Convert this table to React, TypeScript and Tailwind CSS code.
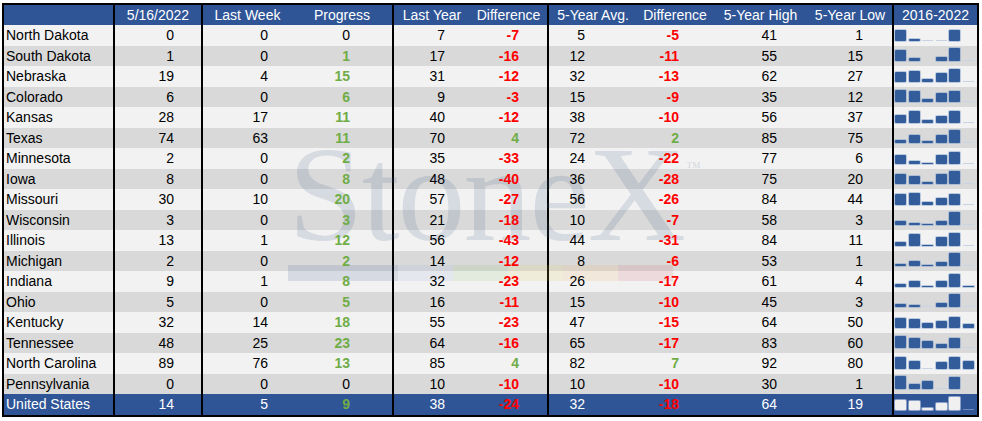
import React from "react";

type Row = [string, number, number, number, number, number, number, number, number, number];

const rows: Row[] = [
  ["North Dakota", 0, 0, 0, 7, -7, 5, -5, 41, 1],
  ["South Dakota", 1, 0, 1, 17, -16, 12, -11, 55, 15],
  ["Nebraska", 19, 4, 15, 31, -12, 32, -13, 62, 27],
  ["Colorado", 6, 0, 6, 9, -3, 15, -9, 35, 12],
  ["Kansas", 28, 17, 11, 40, -12, 38, -10, 56, 37],
  ["Texas", 74, 63, 11, 70, 4, 72, 2, 85, 75],
  ["Minnesota", 2, 0, 2, 35, -33, 24, -22, 77, 6],
  ["Iowa", 8, 0, 8, 48, -40, 36, -28, 75, 20],
  ["Missouri", 30, 10, 20, 57, -27, 56, -26, 84, 44],
  ["Wisconsin", 3, 0, 3, 21, -18, 10, -7, 58, 3],
  ["Illinois", 13, 1, 12, 56, -43, 44, -31, 84, 11],
  ["Michigan", 2, 0, 2, 14, -12, 8, -6, 53, 1],
  ["Indiana", 9, 1, 8, 32, -23, 26, -17, 61, 4],
  ["Ohio", 5, 0, 5, 16, -11, 15, -10, 45, 3],
  ["Kentucky", 32, 14, 18, 55, -23, 47, -15, 64, 50],
  ["Tennessee", 48, 25, 23, 64, -16, 65, -17, 83, 60],
  ["North Carolina", 89, 76, 13, 85, 4, 82, 7, 92, 80],
  ["Pennsylvania", 0, 0, 0, 10, -10, 10, -10, 30, 1],
  ["United States", 14, 5, 9, 38, -24, 32, -18, 64, 19],
];

const sparks: number[][] = [
  [11, 2, 0, 0, 11, -1],
  [11, 3, -1, 4, 13, 0],
  [10, 11, 3, 9, 13, 0],
  [12, 11, 3, 9, 11, 0],
  [8, 12, 3, 7, 12, 0],
  [3, 8, 2, 8, 13, 0],
  [9, 3, 1, 9, 12, 0],
  [10, 8, 2, 10, 13, 0],
  [11, 12, 3, 7, 11, 0],
  [4, 2, 1, 4, 13, 0],
  [4, 12, 1, 9, 13, 0],
  [2, 5, 1, 4, 13, 0],
  [3, 6, 1, 6, 13, 1],
  [3, 2, 0, 4, 13, 0],
  [10, 9, 5, 7, 11, 4],
  [12, 10, 7, 4, 10, 0],
  [12, 8, 0, 7, 12, 8],
  [13, 5, 8, 0, 12, -1],
  [10, 9, 2, 7, 13, 0],
];

const cols = [
  { w: "w-[111px]", pr: "", b: true },
  { w: "w-[88px]", pr: "pr-[27px]", b: true },
  { w: "w-[89px]", pr: "pr-[24px]", b: false },
  { w: "w-[102px]", pr: "pr-[42px]", b: true },
  { w: "w-[76px]", pr: "pr-[25px]", b: false },
  { w: "w-[79px]", pr: "pr-[28px]", b: true },
  { w: "w-[88px]", pr: "pr-[52px]", b: false },
  { w: "w-[76px]", pr: "pr-[34px]", b: false },
  { w: "w-[95px]", pr: "pr-[31px]", b: false },
  { w: "w-[86px]", pr: "pr-[29px]", b: true },
];

const headers = ["", "5/16/2022", "Last Week", "Progress", "Last Year", "Difference", "5-Year Avg.", "Difference", "5-Year High", "5-Year Low"];

function valueClass(ci: number, v: number, total: boolean) {
  if (ci === 3) {
    if (v > 0) return "text-[#70ad47] font-bold";
  }
  if (ci === 5 || ci === 7) {
    if (v < 0) return "text-[#ff0000] font-bold";
    if (v > 0) return "text-[#70ad47] font-bold";
  }
  return total ? "text-white" : "text-black";
}

function Spark({ data, total }: { data: number[]; total: boolean }) {
  return (
    <div className="flex h-full items-end gap-[2.6px] pb-[5px] pl-[1px]">
      {data.map((h, i) => {
        if (h < 0) return <div key={i} className="w-[11px]" />;
        if (h === 0)
          return (
            <div
              key={i}
              className={total ? "h-[1px] w-[11px] bg-[#6f8cbf]" : "h-[1px] w-[11px] bg-[#c9d3e3]"}
            />
          );
        return (
          <div
            key={i}
            className={
              total
                ? "w-[11px] rounded-[1px] bg-[#f0f0f0] shadow-[0_0_0_1px_rgba(200,210,230,0.6)]"
                : "w-[11px] rounded-[1px] bg-[#335c9b] shadow-[0_0_0_1px_rgba(120,150,200,0.45)]"
            }
            style={{ height: `${h}px` }}
          />
        );
      })}
    </div>
  );
}

export default function App() {
  return (
    <div className="h-[421px] w-[982px] bg-white pl-[2px] pt-[3px]" style={{ fontFamily: '"Liberation Sans", Arial, sans-serif' }}>
      <div className="relative w-[977px] border-2 border-black text-[14px] leading-none">
        <div className="flex h-[20px] bg-[#2f5597] text-white">
          {headers.map((h, i) => (
            <div
              key={i}
              className={`${cols[i].w} flex h-full items-center justify-center ${cols[i].b ? "border-r-2 border-black" : ""}`}
            >
              {h}
            </div>
          ))}
          <div className="flex h-full w-[83px] items-center justify-center">2016-2022</div>
        </div>
        {rows.map((r, ri) => {
          const total = ri === rows.length - 1;
          const bg = total ? "bg-[#2f5597]" : ri % 2 === 0 ? "bg-[#f2f2f2]" : "bg-[#d9d9d9]";
          return (
            <div key={ri} className={`flex h-[20.5px] ${bg}`}>
              <div className={`${cols[0].w} flex h-full items-center border-r-2 border-black pl-[2px] ${total ? "text-white" : "text-black"}`}>
                <span className="relative z-[2]">{r[0]}</span>
              </div>
              {r.slice(1).map((v, k) => {
                const ci = k + 1;
                const c = cols[ci];
                return (
                  <div
                    key={ci}
                    className={`${c.w} ${c.pr} flex h-full items-center justify-end ${c.b ? "border-r-2 border-black" : ""}`}
                  >
                    <span className={`relative z-[2] ${valueClass(ci, v as number, total)}`}>{v}</span>
                  </div>
                );
              })}
              <div className="h-full w-[83px]">
                <Spark data={sparks[ri]} total={total} />
              </div>
            </div>
          );
        })}

        <div className="pointer-events-none absolute left-[284px] top-[121px] z-[1]">
          <div
            className="text-[136px] leading-none tracking-[-2px] text-[rgba(80,100,140,0.17)]"
            style={{ fontFamily: '"Liberation Serif", "Times New Roman", serif' }}
          >
            StoneX
          </div>
          <div
            className="absolute left-[398px] top-[34px] text-[15px] text-[rgba(80,100,140,0.2)]"
            style={{ fontFamily: '"Liberation Serif", serif' }}
          >
            ™
          </div>
        </div>
        <div className="pointer-events-none absolute left-[284px] top-[260px] z-[1] flex h-[16px]">
          <div className="w-[110px] bg-[rgba(70,100,150,0.16)]" />
          <div className="w-[55px] bg-[rgba(150,180,220,0.14)]" />
          <div className="w-[55px] bg-[rgba(120,180,80,0.12)]" />
          <div className="w-[55px] bg-[rgba(230,210,80,0.14)]" />
          <div className="w-[55px] bg-[rgba(240,170,80,0.14)]" />
          <div className="w-[55px] bg-[rgba(210,80,90,0.14)]" />
        </div>
      </div>
    </div>
  );
}
